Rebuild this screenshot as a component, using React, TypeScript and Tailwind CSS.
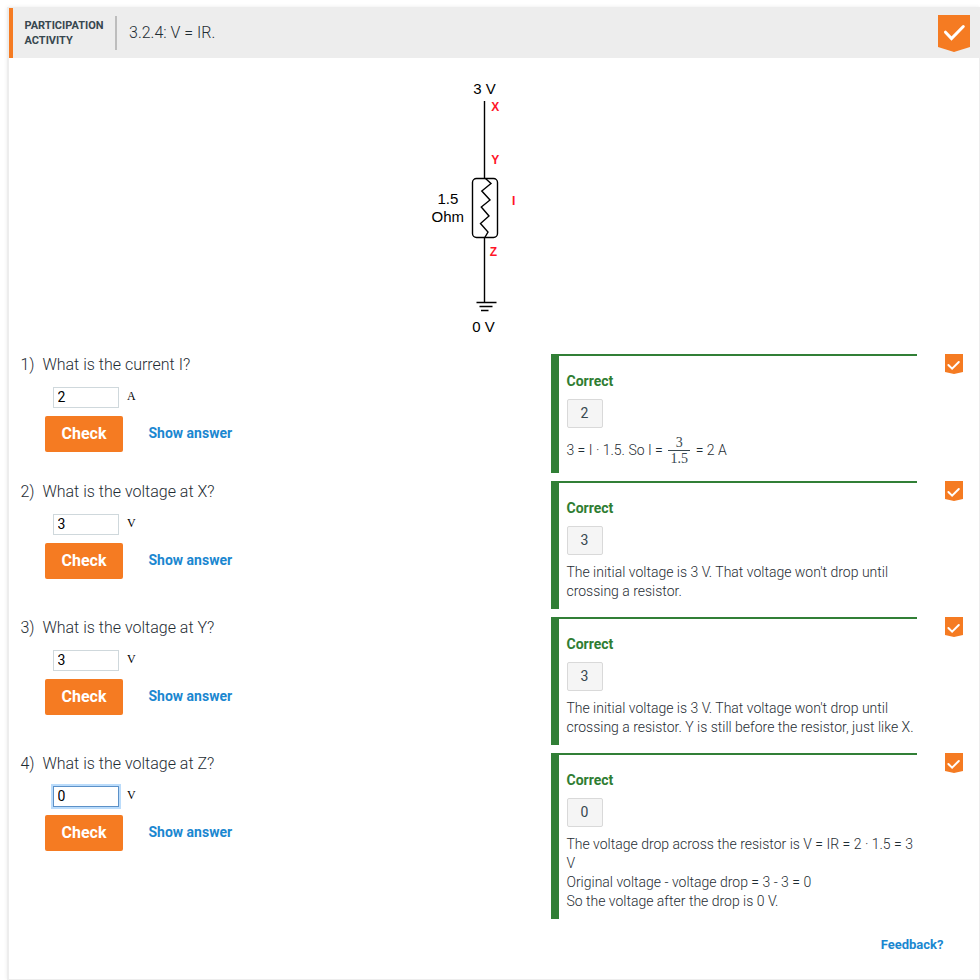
import type { ReactNode } from "react";

const sans = "font-['Roboto','Liberation_Sans',sans-serif]";

function Ribbon({ large = false }: { large?: boolean }) {
  if (large) {
    return (
      <svg width="32" height="37" viewBox="0 0 32 37" className="block">
        <path d="M0 0H32V32L16 37L0 32Z" fill="#f57b22" />
        <path d="M7.5 17.2L13.5 23.5L25.3 11.5" fill="none" stroke="#fff" strokeWidth="3" strokeLinecap="round" strokeLinejoin="miter" />
      </svg>
    );
  }
  return (
    <svg width="18" height="20" viewBox="0 0 18 20" className="block">
      <path d="M0 0H18V18L9 20L0 18Z" fill="#f57b22" />
      <path d="M3.4 11L7.1 14.6L13.8 8" fill="none" stroke="#fff" strokeWidth="2" strokeLinecap="round" />
    </svg>
  );
}

function Circuit() {
  return (
    <svg width="130" height="296" viewBox="410 58 130 296" className="ml-[401px] block font-['Liberation_Sans',Arial,sans-serif]">
      <g fill="none" stroke="#000" strokeWidth="1.4">
        <path d="M484.5 101V178.5M484.5 237.5V302" />
        <rect x="472.5" y="178.5" width="25" height="59" rx="4" />
        <path d="M485.5 178.5L491 183.5L481.8 191L490 200L481.3 207L489 216L480.5 223.5L488 232L484.8 237.5" />
        <path d="M476.5 302.5H496.5M479.5 306.5H492.5M481 310.5H488.5" />
      </g>
      <g fill="#000" fontSize="15">
        <text x="473.3" y="94">3 V</text>
        <text x="437.5" y="204.4">1.5</text>
        <text x="431.5" y="222.4">Ohm</text>
        <text x="472.3" y="332.4">0 V</text>
      </g>
      <g fill="#ff1428" fontSize="12" fontWeight="700">
        <text x="491.2" y="110.6">X</text>
        <text x="491.2" y="164">Y</text>
        <text x="511.9" y="205">I</text>
        <text x="489.8" y="256">Z</text>
      </g>
    </svg>
  );
}

type ItemProps = {
  n: number;
  question: string;
  value: string;
  unit: string;
  focused?: boolean;
  children: ReactNode;
};

function Item({ n, question, value, unit, focused, children }: ItemProps) {
  return (
    <div className="mb-2 flex items-start">
      <div className="w-[542px] shrink-0 pl-3">
        <div className="-ml-[0.6px] flex pt-px text-[16px] leading-5 font-light text-[#1f2d34]">
          <span className="w-[22px]">{n})</span>
          <span>{question}</span>
        </div>
        <div className="mt-3 ml-8 flex h-[21px]">
          <input
            defaultValue={value}
            className={
              focused
                ? "h-[21px] w-[66px] border border-[#5c91c8] pl-[3.5px] text-[14px] text-black outline-2 outline-[#bbdcfb]"
                : "h-[21px] w-[66px] border border-[#cfd8dc] pl-[3.5px] text-[14px] text-black outline-none"
            }
          />
          <span className="ml-2 font-['Liberation_Serif',serif] text-[12px] leading-[18px] text-black">{unit}</span>
        </div>
        <div className="mt-2 ml-6 flex items-center">
          <button className="h-9 w-[78px] rounded-[2px] bg-[#f57b22] text-[16px] font-bold text-white">Check</button>
          <button className="mb-0.5 ml-[25.5px] text-[14px] leading-4 font-bold text-[#1b87d0]">Show answer</button>
        </div>
      </div>
      <div className="w-[366px] shrink-0 border-t-2 border-l-8 border-[#317f36] pb-2 pl-2">
        <div className="mt-[17px] -ml-[0.5px] text-[14px] leading-4 font-bold text-[#2f7d32]">Correct</div>
        <div className="mt-[10px] flex h-[29px] w-9 items-center justify-center rounded-[2px] border border-[#d9d9d9] bg-[#f5f5f5] pr-px text-[14px] text-[#37474f]">
          {value}
        </div>
        <div className="mt-2 -mr-2 -ml-[0.6px] text-[14px] leading-[19px] font-light text-[#1f2d34]">{children}</div>
      </div>
      <div className="ml-7">
        <Ribbon />
      </div>
    </div>
  );
}

export default function App() {
  return (
    <div className={`h-[980px] overflow-hidden bg-white pt-[7px] pl-[7px] ${sans}`}>
      <div className="flex h-[973px] flex-col border border-l-2 border-[#ededed] bg-white shadow-[0_0_4px_rgba(0,0,0,0.08)]">
        <header className="flex h-[50px] shrink-0 items-start border-l-4 border-[#f57b22] bg-[#ededed]">
          <div className="mt-2 flex h-[34px] w-[104px] items-center border-r-2 border-[#bdbdbd] pl-[11.5px] text-[11px] leading-[15px] font-bold text-[#37474f]">
            <span>PARTICIPATION<br />ACTIVITY</span>
          </div>
          <h1 className="mt-[15px] ml-3 flex-1 text-[16px] leading-5 font-light text-[#1f2d34]">3.2.4: V = IR.</h1>
          <div className="mt-[7px] mr-[9px]">
            <Ribbon large />
          </div>
        </header>
        <Circuit />
        <Item n={1} question="What is the current I?" value="2" unit="A">
          <div className="flex h-[29px] items-center whitespace-pre">
            <span>3 = I · 1.5. So I = </span>
            <span className="mx-0.5 flex w-[22px] flex-col items-center font-['Liberation_Serif',serif] text-[14px] leading-[15px] font-normal text-[#37474f]">
              <span>3</span>
              <span className="w-full border-t border-[#37474f] text-center">1.5</span>
            </span>
            <span> = 2 A</span>
          </div>
        </Item>
        <Item n={2} question="What is the voltage at X?" value="3" unit="V">
          The initial voltage is 3 V. That voltage won't drop until<br />crossing a resistor.
        </Item>
        <Item n={3} question="What is the voltage at Y?" value="3" unit="V">
          The initial voltage is 3 V. That voltage won't drop until<br />crossing a resistor. Y is still before the resistor, just like X.
        </Item>
        <Item n={4} question="What is the voltage at Z?" value="0" unit="V" focused>
          The voltage drop across the resistor is V = IR = 2 · 1.5 = 3<br />V<br />Original voltage - voltage drop = 3 - 3 = 0<br />So the voltage after the drop is 0 V.
        </Item>
        <button className="mt-2.5 mr-[35.5px] self-end text-[13px] leading-4 font-bold text-[#1b87d0]">Feedback?</button>
      </div>
    </div>
  );
}
